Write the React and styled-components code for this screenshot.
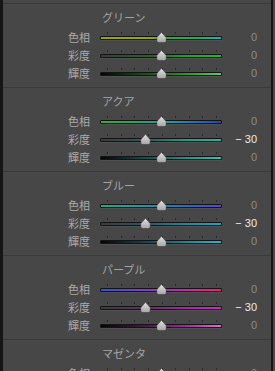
import React from 'react';
import styled, { createGlobalStyle } from 'styled-components';

const Global = createGlobalStyle`
  html, body { margin: 0; padding: 0; background: #474747; }
  body { width: 275px; height: 371px; overflow: hidden; }
`;

const Frame = styled.div`
  width: 275px;
  height: 371px;
  overflow: hidden;
  display: flex;
  background: #4a4a4a;
`;

const Panel = styled.div`
  width: 273px;
  height: 371px;
  box-sizing: border-box;
  background: #474747;
  border-left: 3px solid #161616;
  border-right: 2px solid #161616;
  padding-top: 3px;
  font-family: "Liberation Sans", "Noto Sans CJK JP", sans-serif;
`;

const Section = styled.section`
  border-top: 1px solid #3a3a3a;
  padding: 5px 0 5px;
  height: 84px;
  box-sizing: border-box;
`;

const Title = styled.div`
  height: 16px;
  line-height: 16px;
  margin: 0 0 3px 99px;
  font-family: "Noto Sans CJK JP", sans-serif;
  font-size: 11px;
  color: #a4a4a4;
`;

const Row = styled.div`
  display: flex;
  align-items: center;
  height: 18px;
`;

const Label = styled.div`
  width: 87px;
  text-align: right;
  font-family: "Noto Sans CJK JP", sans-serif;
  font-size: 11px;
  line-height: 18px;
  color: #aaaaaa;
  margin-right: 10px;
`;

const Slider = styled.div`
  position: relative;
  width: 122px;
  height: 18px;
  display: flex;
  align-items: center;
  padding-top: 2px;
  box-sizing: border-box;
`;

const Track = styled.div`
  width: 100%;
  height: 4px;
  box-sizing: border-box;
  border: 1px solid #141414;
  border-radius: 1px;
  background: ${(p) => p.$grad};
  box-shadow: 0 1px 0 rgba(255,255,255,0.05);
`;

const Tick = styled.div`
  position: absolute;
  top: 4px;
  width: 1px;
  height: 2px;
  background: #2a2a2a;
`;

const Thumb = styled.svg`
  position: absolute;
  top: 4px;
  width: 11px;
  height: 11px;
  margin-left: -5.5px;
`;

const Value = styled.div`
  width: 35px;
  text-align: right;
  font-size: 11px;
  line-height: 18px;
  color: ${(p) => (p.$changed ? '#ececec' : '#8c8c8c')};
  white-space: pre;
`;

const sections = [
  {
    title: 'グリーン',
    rows: [
      ['色相', 0, 'linear-gradient(90deg,#a0a400 0%,#94aa04 40%,#30aa32 58%,#20ac60 80%,#18b4b4 100%)'],
      ['彩度', 0, 'linear-gradient(90deg,#3c3c3c 0%,#2c602c 40%,#1ea22a 70%,#22b832 100%)'],
      ['輝度', 0, 'linear-gradient(90deg,#050505 0%,#1d601d 45%,#2aa22a 75%,#66c866 100%)'],
    ],
  },
  {
    title: 'アクア',
    rows: [
      ['色相', 0, 'linear-gradient(90deg,#38ac30 0%,#20a470 35%,#1ea4a4 55%,#2070b4 80%,#2048b4 100%)'],
      ['彩度', -30, 'linear-gradient(90deg,#3c3c3c 0%,#2c5e58 40%,#1e9c8a 70%,#20b4a4 100%)'],
      ['輝度', 0, 'linear-gradient(90deg,#050505 0%,#1a5e58 45%,#209c90 75%,#30c4b4 100%)'],
    ],
  },
  {
    title: 'ブルー',
    rows: [
      ['色相', 0, 'linear-gradient(90deg,#20ac84 0%,#1f98a4 35%,#2082b4 55%,#3062c4 80%,#6242cc 100%)'],
      ['彩度', -30, 'linear-gradient(90deg,#3c3c3c 0%,#2c5864 40%,#1d8aa4 70%,#20a4bc 100%)'],
      ['輝度', 0, 'linear-gradient(90deg,#050505 0%,#1a5262 45%,#1f8ea4 75%,#28b4cc 100%)'],
    ],
  },
  {
    title: 'パープル',
    rows: [
      ['色相', 0, 'linear-gradient(90deg,#3252d4 0%,#7242cc 30%,#a432bc 55%,#d42a9c 80%,#ec2272 100%)'],
      ['彩度', -30, 'linear-gradient(90deg,#3c3c3c 0%,#5c3460 40%,#a42a9e 70%,#cc2ac4 100%)'],
      ['輝度', 0, 'linear-gradient(90deg,#050505 0%,#4c1a4c 40%,#9e2c9c 70%,#dc6cd0 100%)'],
    ],
  },
  {
    title: 'マゼンタ',
    rows: [
      ['色相', 0, 'linear-gradient(90deg,#8242cc 0%,#b432b4 40%,#dc2a94 70%,#ec2252 100%)'],
      ['彩度', 0, 'linear-gradient(90deg,#3c3c3c 0%,#b42aa4 100%)'],
      ['輝度', 0, 'linear-gradient(90deg,#050505 0%,#d452b4 100%)'],
    ],
  },
];

const TICKS = Array.from({ length: 9 }, (_, i) => 7 + (i * 109) / 8);

function SliderRow({ label, value, grad }) {
  const pos = 7 + ((value + 100) / 200) * 109;
  const text = value < 0 ? `\u2212 ${Math.abs(value)}` : String(value);
  return (
    <Row>
      <Label>{label}</Label>
      <Slider>
        {TICKS.map((x) => (
          <Tick key={x} style={{ left: `${Math.round(x)}px` }} />
        ))}
        <Track $grad={grad} />
        <Thumb viewBox="0 0 11 11" style={{ left: `${pos}px` }}>
          <defs>
            <linearGradient id="tg" x1="0" y1="0" x2="0" y2="1">
              <stop offset="0" stopColor="#e2e2e2" />
              <stop offset="1" stopColor="#a4a4a4" />
            </linearGradient>
          </defs>
          <path
            d="M5.5 0.3 L10.2 5.6 L10.2 8.8 Q10.2 10.6 8.4 10.6 L2.6 10.6 Q0.8 10.6 0.8 8.8 L0.8 5.6 Z"
            fill="url(#tg)"
            stroke="#333333"
            strokeWidth="0.5"
          />
        </Thumb>
      </Slider>
      <Value $changed={value !== 0}>{text}</Value>
    </Row>
  );
}

export default function App() {
  return (
    <>
      <Global />
      <Frame>
        <Panel>
          {sections.map((s) => (
            <Section key={s.title}>
              <Title>{s.title}</Title>
              {s.rows.map(([l, v, g]) => (
                <SliderRow key={l} label={l} value={v} grad={g} />
              ))}
            </Section>
          ))}
        </Panel>
      </Frame>
    </>
  );
}
